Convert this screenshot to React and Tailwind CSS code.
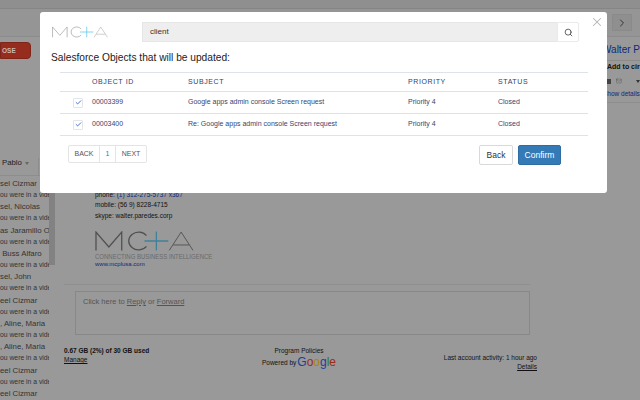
import { Check, Search, X, Mail, ChevronRight } from 'lucide-react';

const sans = { fontFamily: '"Liberation Sans", Arial, sans-serif' };

const threads = [
  'sel Cizmar',
  'sel, Nicolas',
  'as Jaramillo O',
  ' Buss Alfaro',
  'sel, John',
  'eel Cizmar',
  ', Aline, Maria',
  ', Aline, Maria',
  'eel Cizmar',
  'eel Cizmar',
];

const rows = [
  { id: '00003399', subject: 'Google apps admin console Screen request' },
  { id: '00003400', subject: 'Re: Google apps admin console Screen request' },
];

const McaLogo = ({ width, height, plus, dark, thin }) => (
  <svg width={width} height={height} viewBox="0 0 100 20" fill="none" className="block">
    <path d="M1 19.5V1L14 16 27 1v18.5" stroke={dark} strokeWidth={thin} />
    <path d="M52 4.5A10 9 0 1 0 52 15.500" stroke={dark} strokeWidth={thin} />
    <path d="M50 10H74M62 .5v19" stroke={plus} strokeWidth={thin} />
    <path d="M75 19.500 87 1l12 18.500M79 14h16" stroke={dark} strokeWidth={thin * 0.7} />
  </svg>
);

const Backdrop = () => (
  <div className="w-[640px] h-[400px] overflow-hidden bg-[#999999] flex flex-col text-[#111]" style={sans}>
    <div className="h-[9px] shrink-0 bg-[#8f8f8f] border-b border-[#858585]" />
    <div className="h-[28px] shrink-0 bg-[#959595] border-b border-[#8b8b8b] flex justify-end pr-[8px] pt-[5px]">
      <div className="w-[20px] h-[17px] border border-[#8a8a8a] bg-[#8f8f8f] flex items-center justify-center">
        <ChevronRight size={12} strokeWidth={2} className="text-[#333]" />
      </div>
    </div>
    <div className="flex-1 flex min-h-0">
      <aside className="w-[55px] shrink-0 flex flex-col">
        <div className="mt-[5px] w-[31px] h-[17px] bg-[#962c1e] rounded-r-sm border border-[#7f2418] flex items-center pl-[1px]">
          <span className="text-[6.500px] font-bold text-[#cfb5b0]">OSE</span>
        </div>
        <div className="mt-[99px] h-[18px] border-b border-[#8d8d8d] text-[7.800px] leading-[10px] pl-[2px] flex items-start gap-[3px] text-[#222]">
          <span>Pablo</span>
          <span className="mt-[4px] w-0 h-0 border-x-[2px] border-t-[3px] border-x-transparent border-t-[#666]" />
          <span className="ml-auto mr-[16px] h-full border-l border-[#8d8d8d]" />
        </div>
        <div className="relative flex-1 overflow-hidden">
          <div className="absolute right-0 top-0 w-[6px] h-[89px] bg-[#828282]" />
          <ul className="whitespace-pre pt-[2px] w-[49px] overflow-hidden">
            {threads.map((name, i) => (
              <li key={i} className="h-[23.330px] overflow-hidden">
                <div className="text-[7.800px] leading-[12px] text-[#333]">{name}</div>
                <div className="text-[6.800px] leading-[10px] text-[#333]">ou were in a video</div>
              </li>
            ))}
          </ul>
        </div>
      </aside>
      <main className="w-[490px] shrink-0 flex flex-col pl-[9px]">
        <div className="flex-1 flex flex-col justify-end pb-[10px] pl-[31px] text-[6.500px] leading-[10.500px]">
          <div>phone: <span className="text-[#0a2a7a]">(1) 312-275-5737 x367</span></div>
          <div>mobile: (56 9) 8228-4715</div>
          <div>skype: walter.paredes.corp</div>
        </div>
        <div className="ml-[31px]">
          <McaLogo width={99} height={20} plus="#3f8199" dark="#505050" thin={1.300} />
          <div className="text-[8px] leading-[9px] text-[#6b6b6b] mt-[1px] whitespace-nowrap origin-left scale-x-[0.75]">CONNECTING BUSINESS INTELLIGENCE</div>
          <div className="text-[6px] leading-[7px] text-[#0a2a7a]">www.mcplusa.com</div>
        </div>
        <div className="mt-[16px] w-[466px] border-t border-[#8f8f8f] h-[7px]" />
        <div className="ml-[11px] h-[44px] w-[455px] border border-[#888] px-[7px] pt-[3px] text-[7.500px] text-[#555] leading-[14px]">
          Click here to <span className="underline">Reply</span> or <span className="underline">Forward</span>
        </div>
        <div className="h-[65px] pt-[11px] flex text-[6.500px] leading-[9px] whitespace-nowrap">
          <div className="w-[199px]">
            <div className="font-bold">0.67 GB (2%) of 30 GB used</div>
            <div className="underline">Manage</div>
          </div>
          <div className="w-[72px] flex flex-col items-center">
            <div>Program Policies</div>
            <div className="flex items-end mt-[1px]">
              <span className="mb-[1px]">Powered by</span>
              <span className="text-[12px] leading-[12px] ml-[1px]">
                <span className="text-[#1a3f9a]">G</span><span className="text-[#9a2a1c]">o</span><span className="text-[#a88410]">o</span><span className="text-[#1a3f9a]">g</span><span className="text-[#2a7a34]">l</span><span className="text-[#9a2a1c]">e</span>
              </span>
            </div>
          </div>
          <div className="w-[202px] pt-[7px] flex flex-col items-end">
            <div>Last account activity: 1 hour ago</div>
            <div className="underline">Details</div>
          </div>
        </div>
      </main>
      <aside className="flex-1 min-w-0 whitespace-nowrap overflow-hidden pl-[57px]">
        <div className="text-[10px] leading-[14px] mt-[6px] text-[#0a2a7a]">Walter Paredes</div>
        <div className="text-[7px] font-bold mt-[3px] ml-[5px] leading-[10px] border-t border-[#8a8a8a] pt-[1px]">Add to circles</div>
        <div className="flex items-center gap-[5px] mt-[4px] ml-[5px]">
          <span className="w-[7px] h-[5px] bg-[#444]" />
          <Mail size={10} strokeWidth={1.300} className="text-[#444]" />
          <span className="w-0 h-0 ml-[9px] border-x-[2px] border-t-[3px] border-x-transparent border-t-[#333]" />
        </div>
        <div className="text-[6.500px] mt-[2px] ml-[1px] leading-[11px] text-[#0a2a7a]">Show details</div>
        <div className="mt-[3px] border-t border-[#8d8d8d]" />
      </aside>
    </div>
  </div>
);

const Modal = () => (
  <div className="absolute left-[40px] top-[12px] w-[567px] h-[181px] bg-white rounded-[3px] px-[11px] pt-[10px]" style={sans}>
    <button className="absolute right-[3px] top-[3px] text-[#b4b4b4]">
      <X size={14} strokeWidth={1.800} />
    </button>
    <div className="flex items-center">
      <div className="ml-[1px] w-[90px]">
        <McaLogo width={56} height={14} plus="#5cc4e8" dark="#a3a3a3" thin={1.300} />
      </div>
      <div className="flex w-[437px] h-[20px]">
        <div className="flex-1 bg-[#eeeeee] border-t border-l border-b border-[#e6e6e6] text-[8px] leading-[18px] pl-[7px] text-[#333]">client</div>
        <div className="w-[22px] border border-[#eaeaea] rounded-r-[2px] flex items-center justify-center">
          <Search size={9} strokeWidth={2} className="text-[#333]" />
        </div>
      </div>
    </div>
    <h2 className="mt-[8px] text-[10.200px] leading-[16px] text-[#222]">Salesforce Objects that will be updated:</h2>
    <table className="mt-[6px] ml-[9px] w-[528px] table-fixed border-t border-[#dfe2ea] text-[7px] text-[#36466e]">
      <thead>
        <tr className="h-[19px] border-b border-[#e0e2e8] text-left">
          <th className="w-[32px] p-0" />
          <th className="w-[96px] p-0 font-normal tracking-[0.6px] text-[#2e4272]">OBJECT ID</th>
          <th className="w-[220px] p-0 font-normal tracking-[0.6px] text-[#2e4272]">SUBJECT</th>
          <th className="w-[90px] p-0 font-normal tracking-[0.6px] text-[#2e4272]">PRIORITY</th>
          <th className="p-0 font-normal tracking-[0.6px] text-[#2e4272]">STATUS</th>
        </tr>
      </thead>
      <tbody>
        {rows.map((row) => (
          <tr key={row.id} className="h-[22px] border-b border-[#e0e2e8]">
            <td className="p-0">
              <span className="ml-[13px] w-[10px] h-[10px] border border-[#e3e5ea] rounded-[1px] flex items-center justify-center">
                <Check size={7} strokeWidth={3} className="text-[#2a62d0]" />
              </span>
            </td>
            <td className="p-0">{row.id}</td>
            <td className="p-0">{row.subject}</td>
            <td className="p-0">Priority 4</td>
            <td className="p-0">Closed</td>
          </tr>
        ))}
      </tbody>
    </table>
    <div className="mt-[9px] flex items-start justify-between pl-[17px] pr-[35px]">
      <div className="flex h-[18px] border border-[#e4e4e4] rounded-[2px] text-[7px] leading-[16px] text-[#555]">
        <span className="w-[31px] text-center border-r border-[#e4e4e4]">BACK</span>
        <span className="w-[16px] text-center border-r border-[#e4e4e4] text-[#337ab7]">1</span>
        <span className="w-[30px] text-center">NEXT</span>
      </div>
      <div className="flex gap-[5px]">
        <button className="w-[34px] h-[20px] border border-[#d9d9d9] rounded-[2px] text-[8.500px] text-[#333]">Back</button>
        <button className="w-[43px] h-[20px] border border-[#2e6da4] bg-[#337ab7] rounded-[2px] text-[8.500px] text-white">Confirm</button>
      </div>
    </div>
  </div>
);

export default function App() {
  return (
    <div className="relative w-[640px] h-[400px] overflow-hidden">
      <Backdrop />
      <Modal />
    </div>
  );
}
